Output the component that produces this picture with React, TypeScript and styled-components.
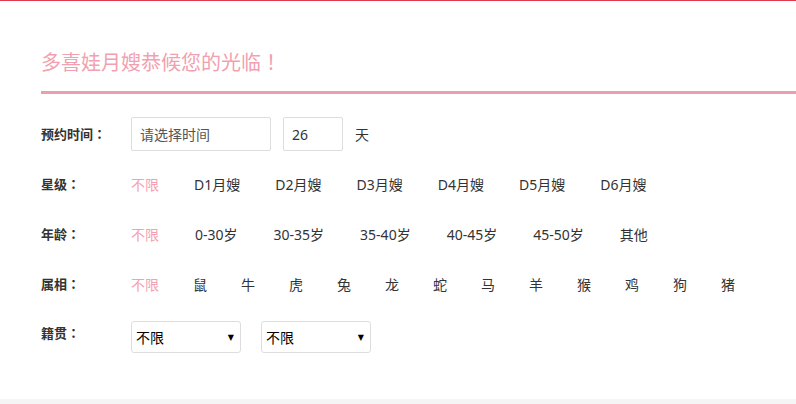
//-----------------------------------------------------------------------------
// Imports
//-----------------------------------------------------------------------------
import React, { useState } from 'react'
import styled, { createGlobalStyle } from 'styled-components'

//-----------------------------------------------------------------------------
// Data
//-----------------------------------------------------------------------------
const levels = ['不限', 'D1月嫂', 'D2月嫂', 'D3月嫂', 'D4月嫂', 'D5月嫂', 'D6月嫂']
const ages = ['不限', '0-30岁', '30-35岁', '35-40岁', '40-45岁', '45-50岁', '其他']
const zodiacs = ['不限', '鼠', '牛', '虎', '兔', '龙', '蛇', '马', '羊', '猴', '鸡', '狗', '猪']

//-----------------------------------------------------------------------------
// Component
//-----------------------------------------------------------------------------
const App = () => {

  const [ activeLevel, setActiveLevel ] = useState('不限')
  const [ activeAge, setActiveAge ] = useState('不限')
  const [ activeZodiac, setActiveZodiac ] = useState('不限')
  const [ days, setDays ] = useState('26')

  return (
    <>
      <GlobalStyle />
      <Page>
        <Title>多喜娃月嫂恭候您的光临<Punct>！</Punct></Title>
        <Divider />
        <Form>
          <Row>
            <Label>预约时间<Punct>：</Punct></Label>
            <DateInput placeholder="请选择时间" />
            <DaysInput value={days} onChange={e => setDays(e.target.value)} />
            <Unit>天</Unit>
          </Row>
          <Row>
            <Label>星级<Punct>：</Punct></Label>
            <Options gap={35}>
              {levels.map(level =>
                <Option key={level} isActive={level === activeLevel} onClick={() => setActiveLevel(level)}>
                  {level}
                </Option>
              )}
            </Options>
          </Row>
          <Row>
            <Label>年龄<Punct>：</Punct></Label>
            <Options gap={36}>
              {ages.map(age =>
                <Option key={age} isActive={age === activeAge} onClick={() => setActiveAge(age)}>
                  {age}
                </Option>
              )}
            </Options>
          </Row>
          <Row>
            <Label>属相<Punct>：</Punct></Label>
            <Options gap={34}>
              {zodiacs.map(zodiac =>
                <Option key={zodiac} isActive={zodiac === activeZodiac} onClick={() => setActiveZodiac(zodiac)}>
                  {zodiac}
                </Option>
              )}
            </Options>
          </Row>
          <LastRow>
            <Label>籍贯<Punct>：</Punct></Label>
            <Selects>
              <Select>
                <span>不限</span>
                <Arrow>▼</Arrow>
              </Select>
              <Select>
                <span>不限</span>
                <Arrow>▼</Arrow>
              </Select>
            </Selects>
          </LastRow>
        </Form>
      </Page>
      <Footer />
    </>
  )
}

//-----------------------------------------------------------------------------
// Styled Components
//-----------------------------------------------------------------------------
const GlobalStyle = createGlobalStyle`
  * {
    box-sizing: border-box;
  }
  body {
    margin: 0;
    background-color: white;
    font-family: "Noto Sans", "Noto Sans CJK SC", sans-serif;
    color: #333;
  }
`

const Page = styled.div`
  height: 399px;
  padding-left: 41px;
  border-top: 1px solid #e0394d;
  display: flex;
  flex-direction: column;
`

const Title = styled.div`
  margin-top: 46px;
  height: 30px;
  line-height: 30px;
  font-size: 20px;
  color: #f29fb0;
`

// full-width punctuation sits centred in its box, as in the reference
const Punct = styled.span`
  font-family: "Noto Sans CJK TC", sans-serif;
`

const Divider = styled.div`
  margin-top: 14px;
  height: 3px;
  background-color: #eb9eab;
`

const Form = styled.div`
  margin-top: 15px;
  display: flex;
  flex-direction: column;
`

const Row = styled.div`
  height: 50px;
  display: flex;
  align-items: center;
`

const LastRow = styled.div`
  padding-top: 12px;
  display: flex;
  align-items: flex-start;
`

const Label = styled.div`
  width: 90px;
  flex-shrink: 0;
  line-height: 24px;
  font-size: 13px;
  font-weight: bold;
  color: #333;
`

const BaseInput = styled.input`
  height: 34px;
  padding: 0 8px;
  border: 1px solid #ddd;
  border-radius: 2px;
  outline: none;
  font-family: inherit;
  font-size: 14px;
  color: #333;
  &::placeholder {
    color: #555;
  }
`

const DateInput = styled(BaseInput)`
  width: 140px;
`

const DaysInput = styled(BaseInput)`
  margin-left: 12px;
  width: 60px;
`

const Unit = styled.span`
  margin-left: 12px;
  font-size: 14px;
`

const Options = styled.div<{ gap: number }>`
  display: flex;
  gap: ${ ({ gap }) => gap }px;
`

const Option = styled.span<{ isActive: boolean }>`
  cursor: pointer;
  font-size: 14px;
  white-space: nowrap;
  color: ${ ({ isActive }) => isActive ? '#f5a0b2' : '#333'};
`

const Selects = styled.div`
  display: flex;
  gap: 20px;
`

const Select = styled.div`
  width: 110px;
  height: 32px;
  padding: 0 6px 0 4px;
  border: 1px solid #ddd;
  border-radius: 3px;
  display: flex;
  align-items: center;
  justify-content: space-between;
  font-size: 14px;
  color: black;
  cursor: pointer;
`

const Arrow = styled.span`
  font-family: "DejaVu Sans", sans-serif;
  font-size: 8px;
`

const Footer = styled.div`
  height: 5px;
  background-color: #f5f5f5;
`

export default App
